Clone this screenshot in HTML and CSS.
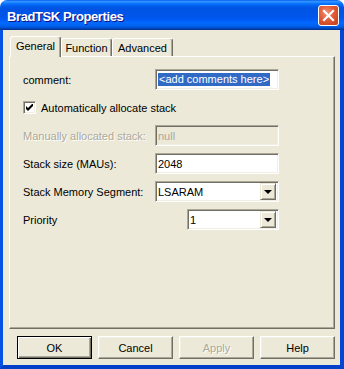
FILE: index.html
```html
<!DOCTYPE html>
<html lang="en">
<head>
    <meta charset="UTF-8">
    <title>BradTSK Properties</title>
    <link rel="stylesheet" href="styles.css">
</head>
<body>
    <div class="window">
        <div class="titlebar">
            <span class="title">BradTSK Properties</span>
            <div class="close">
                <svg width="19" height="19" viewBox="0 0 19 19">
                    <path d="M5 5 L14 14 M14 5 L5 14" stroke="#fff" stroke-width="2.2" stroke-linecap="square"/>
                </svg>
            </div>
        </div>

        <div class="client">
            <div class="tabs">
                <div class="tab active">General</div>
                <div class="tab">Function</div>
                <div class="tab wide">Advanced</div>
            </div>

            <div class="panel">
                <div class="row">
                    <span class="label">comment:</span>
                    <div class="field"><span class="selected">&lt;add comments here&gt;</span></div>
                </div>

                <div class="row">
                    <span class="checkbox">
                        <svg width="7" height="7" viewBox="0 0 7 7">
                            <path d="M0 2 L2 4 L7 -1 L7 2 L2 7 L0 5 Z" fill="#000"/>
                        </svg>
                    </span>
                    <span>Automatically allocate stack</span>
                </div>

                <div class="row disabled">
                    <span class="label">Manually allocated stack:</span>
                    <div class="field">null</div>
                </div>

                <div class="row">
                    <span class="label">Stack size (MAUs):</span>
                    <div class="field">2048</div>
                </div>

                <div class="row">
                    <span class="label">Stack Memory Segment:</span>
                    <div class="field combo">
                        <span>LSARAM</span>
                        <span class="drop"><span class="arrow"></span></span>
                    </div>
                </div>

                <div class="row">
                    <span class="label">Priority</span>
                    <div class="field combo short">
                        <span>1</span>
                        <span class="drop"><span class="arrow"></span></span>
                    </div>
                </div>
            </div>

            <div class="buttons">
                <div class="btn default">OK</div>
                <div class="btn">Cancel</div>
                <div class="btn off">Apply</div>
                <div class="btn">Help</div>
            </div>
        </div>
    </div>
</body>
</html>
```

FILE: styles.css
```css
* {
    margin: 0;
    padding: 0;
    box-sizing: border-box;
}

body {
    background: #ffffff;
    font-family: 'Liberation Sans', Arial, sans-serif;
    font-size: 11px;
    color: #000;
}

.window {
    width: 344px;
    height: 369px;
    display: flex;
    flex-direction: column;
}

.titlebar {
    height: 30px;
    display: flex;
    align-items: center;
    justify-content: space-between;
    padding: 0 5px 0 7px;
    border-radius: 7px 7px 0 0;
    background: linear-gradient(to bottom,
        #0058ee 0%, #3593ff 4%, #288eff 7%, #127dff 10%,
        #036ffc 14%, #0262ee 18%, #0057e5 24%, #0054e3 30%,
        #0055eb 56%, #005bf5 66%, #026afe 76%, #0062ef 86%,
        #0052d6 92%, #0040ab 96%, #003092 100%);
}

.title {
    color: #fff;
    font-weight: bold;
    font-size: 13px;
    letter-spacing: -0.4px;
    padding-top: 3px;
    text-shadow: 1px 1px #0f1089;
}

.close {
    width: 21px;
    height: 21px;
    border: 1px solid #fff;
    border-radius: 3px;
    background: radial-gradient(circle at 40% 35%, #f09477 0%, #e25b36 45%, #c33a18 100%);
    display: flex;
    align-items: center;
    justify-content: center;
}

.client {
    flex: 1;
    background: #ece9d8;
    border-left: 3px solid #0553e5;
    border-right: 4px solid #0346d6;
    border-bottom: 4px solid #0340c8;
    padding: 6px 5px 0 6px;
    display: flex;
    flex-direction: column;
}

.tabs {
    height: 20px;
    display: flex;
    align-items: flex-end;
    padding-left: 1px;
}

.tab {
    width: 51px;
    height: 18px;
    display: flex;
    align-items: center;
    justify-content: center;
    padding-top: 1px;
    border: 1px solid #fff;
    border-right-color: #716f64;
    border-bottom: none;
    border-radius: 3px 3px 0 0;
    box-shadow: inset -1px 0 #aca899;
    background: #ece9d8;
}

.tab.wide {
    width: 61px;
}

.tab.active {
    height: 21px;
    margin-bottom: -1px;
    padding-top: 0;
    padding-bottom: 2px;
    position: relative;
    z-index: 1;
}

.panel {
    height: 273px;
    border: 1px solid #fff;
    border-right-color: #716f64;
    border-bottom-color: #716f64;
    box-shadow: inset -1px -1px #aca899;
    padding: 12px 0 0 13px;
    display: flex;
    flex-direction: column;
    gap: 7px;
}

.row {
    height: 21px;
    display: flex;
    align-items: center;
}

.label {
    width: 132px;
}

.field {
    width: 124px;
    height: 21px;
    display: flex;
    align-items: center;
    padding-left: 2px;
    background: #fff;
    border: 1px solid;
    border-color: #aca899 #fff #fff #aca899;
    box-shadow: inset 1px 1px #716f64, inset -1px -1px #f1efe2;
}

.selected {
    background: #316ac5;
    color: #fff;
    padding: 0 1px;
    line-height: 13px;
}

.disabled .label {
    color: #aca899;
    text-shadow: 1px 1px #fff;
}

.disabled .field {
    background: #ece9d8;
    color: #aca899;
}

.checkbox {
    width: 13px;
    height: 13px;
    margin-right: 5px;
    display: flex;
    align-items: center;
    justify-content: center;
    background: #fff;
    border: 1px solid;
    border-color: #aca899 #fff #fff #aca899;
    box-shadow: inset 1px 1px #716f64, inset -1px -1px #f1efe2;
}

.combo {
    justify-content: space-between;
    padding-right: 2px;
}

.short {
    width: 92px;
    margin-left: 32px;
}

.drop {
    width: 16px;
    height: 17px;
    display: flex;
    align-items: center;
    justify-content: center;
    background: #ece9d8;
    border: 1px solid;
    border-color: #ece9d8 #716f64 #716f64 #ece9d8;
    box-shadow: inset 1px 1px #fff, inset -1px -1px #aca899;
}

.arrow {
    width: 0;
    height: 0;
    border-left: 4px solid transparent;
    border-right: 4px solid transparent;
    border-top: 4px solid #000;
    margin-top: 1px;
}

.buttons {
    display: flex;
    justify-content: flex-end;
    gap: 6px;
    margin-top: 7px;
}

.btn {
    width: 75px;
    height: 23px;
    display: flex;
    align-items: center;
    justify-content: center;
    background: #ece9d8;
    border: 1px solid;
    border-color: #fff #716f64 #716f64 #fff;
    box-shadow: inset -1px -1px #aca899, inset 1px 1px #f1efe2;
}

.btn.default {
    border-color: #000;
    box-shadow: inset 1px 1px #fff, inset -1px -1px #716f64, inset -2px -2px #aca899;
}

.btn.off {
    color: #aca899;
    text-shadow: 1px 1px #fff;
}
```
